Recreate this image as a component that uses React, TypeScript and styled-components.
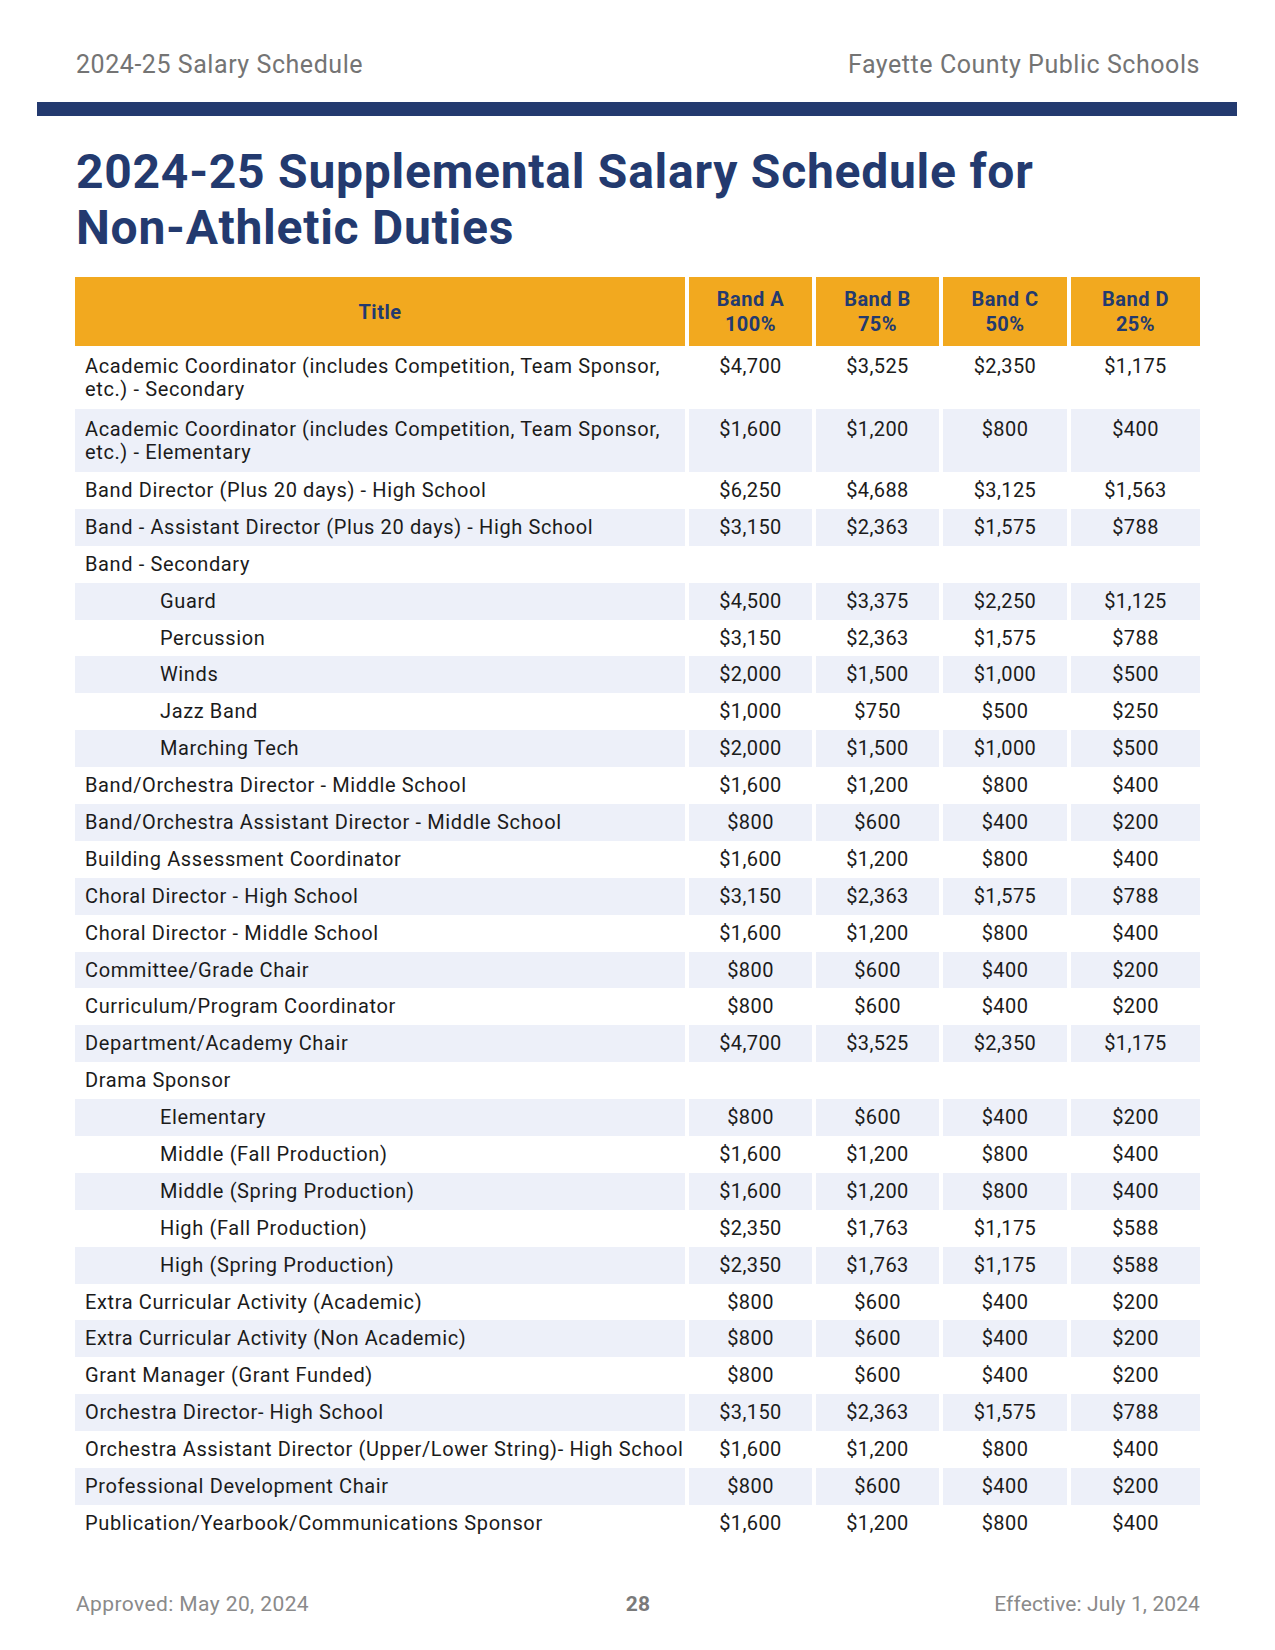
import React from "react";
import styled, { createGlobalStyle } from "styled-components";

const GlobalStyle = createGlobalStyle`
  html, body {
    margin: 0;
    padding: 0;
    background: #ffffff;
  }
  body {
    font-family: Roboto, "Liberation Sans", Arial, sans-serif;
    color: #1b1b1b;
  }
`;

const Page = styled.div`
  width: 1275px;
  min-height: 1650px;
  box-sizing: border-box;
  padding-top: 50px;
`;

const RunningHead = styled.header`
  display: flex;
  justify-content: space-between;
  padding: 0 75px 0 76px;
  font-size: 25px;
  line-height: 30px;
  letter-spacing: 0.55px;
  color: #747474;
`;

const NavyBar = styled.div`
  height: 14px;
  margin: 22px 38px 0 37px;
  background: #233a6f;
`;

const Heading = styled.h1`
  margin: 28px 75px 0 76px;
  font-size: 48px;
  line-height: 56px;
  font-weight: 700;
  letter-spacing: 0.75px;
  color: #233a6f;
`;

const Table = styled.table`
  margin: 21px 0 0 71px;
  width: 1133px;
  table-layout: fixed;
  border-collapse: separate;
  border-spacing: 4px 0;
`;

const HeadCell = styled.th`
  background: #f2a91f;
  color: #233a6f;
  font-size: 20px;
  line-height: 25px;
  font-weight: 700;
  letter-spacing: 0.5px;
  padding: 10px 4px 9px;
  text-align: center;
  vertical-align: middle;
`;

const Row = styled.tr`
  &:nth-child(even) > td {
    background: #edf0f9;
  }
`;

const TitleCell = styled.td<{ $indent?: boolean; $multi?: boolean }>`
  padding: ${(p) => (p.$multi ? "8.5px 2px 8.5px 10px" : "7px 0 6.9px 10px")};
  padding-left: ${(p) => (p.$indent ? "85px" : "10px")};
  font-size: 20px;
  line-height: 23px;
  letter-spacing: 0.62px;
  white-space: ${(p) => (p.$multi ? "normal" : "nowrap")};
  vertical-align: top;
  text-align: left;
`;

const AmountCell = styled.td<{ $multi?: boolean }>`
  padding: ${(p) => (p.$multi ? "8.5px 0" : "7px 0 6.9px")};
  font-size: 20px;
  line-height: 23px;
  letter-spacing: 0.4px;
  vertical-align: top;
  text-align: center;
`;

const Footer = styled.footer`
  display: grid;
  grid-template-columns: 1fr auto 1fr;
  margin: 50px 75px 0 76px;
  font-size: 21px;
  line-height: 25px;
  letter-spacing: 0.3px;
  color: #8a8a8a;
`;

const FooterLeft = styled.span`
  justify-self: start;
  letter-spacing: 0.4px;
`;

const PageNumber = styled.span`
  justify-self: center;
  font-weight: 700;
  color: #7a7a7a;
`;

const FooterRight = styled.span`
  justify-self: end;
  letter-spacing: 0.1px;
`;

type Entry = {
  title: string;
  values?: [string, string, string, string];
  indent?: boolean;
  multi?: boolean;
};

const rows: Entry[] = [
  {
    title: "Academic Coordinator (includes Competition, Team Sponsor, etc.) - Secondary",
    values: ["$4,700", "$3,525", "$2,350", "$1,175"],
    multi: true,
  },
  {
    title: "Academic Coordinator (includes Competition, Team Sponsor, etc.) - Elementary",
    values: ["$1,600", "$1,200", "$800", "$400"],
    multi: true,
  },
  { title: "Band Director (Plus 20 days) - High School", values: ["$6,250", "$4,688", "$3,125", "$1,563"] },
  { title: "Band - Assistant Director (Plus 20 days) - High School", values: ["$3,150", "$2,363", "$1,575", "$788"] },
  { title: "Band - Secondary" },
  { title: "Guard", values: ["$4,500", "$3,375", "$2,250", "$1,125"], indent: true },
  { title: "Percussion", values: ["$3,150", "$2,363", "$1,575", "$788"], indent: true },
  { title: "Winds", values: ["$2,000", "$1,500", "$1,000", "$500"], indent: true },
  { title: "Jazz Band", values: ["$1,000", "$750", "$500", "$250"], indent: true },
  { title: "Marching Tech", values: ["$2,000", "$1,500", "$1,000", "$500"], indent: true },
  { title: "Band/Orchestra Director - Middle School", values: ["$1,600", "$1,200", "$800", "$400"] },
  { title: "Band/Orchestra Assistant Director - Middle School", values: ["$800", "$600", "$400", "$200"] },
  { title: "Building Assessment Coordinator", values: ["$1,600", "$1,200", "$800", "$400"] },
  { title: "Choral Director - High School", values: ["$3,150", "$2,363", "$1,575", "$788"] },
  { title: "Choral Director - Middle School", values: ["$1,600", "$1,200", "$800", "$400"] },
  { title: "Committee/Grade Chair", values: ["$800", "$600", "$400", "$200"] },
  { title: "Curriculum/Program Coordinator", values: ["$800", "$600", "$400", "$200"] },
  { title: "Department/Academy Chair", values: ["$4,700", "$3,525", "$2,350", "$1,175"] },
  { title: "Drama Sponsor" },
  { title: "Elementary", values: ["$800", "$600", "$400", "$200"], indent: true },
  { title: "Middle (Fall Production)", values: ["$1,600", "$1,200", "$800", "$400"], indent: true },
  { title: "Middle (Spring Production)", values: ["$1,600", "$1,200", "$800", "$400"], indent: true },
  { title: "High (Fall Production)", values: ["$2,350", "$1,763", "$1,175", "$588"], indent: true },
  { title: "High (Spring Production)", values: ["$2,350", "$1,763", "$1,175", "$588"], indent: true },
  { title: "Extra Curricular Activity (Academic)", values: ["$800", "$600", "$400", "$200"] },
  { title: "Extra Curricular Activity (Non Academic)", values: ["$800", "$600", "$400", "$200"] },
  { title: "Grant Manager (Grant Funded)", values: ["$800", "$600", "$400", "$200"] },
  { title: "Orchestra Director- High School", values: ["$3,150", "$2,363", "$1,575", "$788"] },
  {
    title: "Orchestra Assistant Director (Upper/Lower String)- High School",
    values: ["$1,600", "$1,200", "$800", "$400"],
  },
  { title: "Professional Development Chair", values: ["$800", "$600", "$400", "$200"] },
  { title: "Publication/Yearbook/Communications Sponsor", values: ["$1,600", "$1,200", "$800", "$400"] },
];

const bands = [
  ["Band A", "100%"],
  ["Band B", "75%"],
  ["Band C", "50%"],
  ["Band D", "25%"],
];

export default function App() {
  return (
    <Page>
      <GlobalStyle />
      <RunningHead>
        <span>2024-25 Salary Schedule</span>
        <span>Fayette County Public Schools</span>
      </RunningHead>
      <NavyBar />
      <Heading>
        2024-25 Supplemental Salary Schedule for
        <br />
        Non-Athletic Duties
      </Heading>
      <Table>
        <colgroup>
          <col style={{ width: 610 }} />
          <col style={{ width: 123 }} />
          <col style={{ width: 123 }} />
          <col style={{ width: 124 }} />
          <col />
        </colgroup>
        <thead>
          <tr>
            <HeadCell>Title</HeadCell>
            {bands.map(([name, pct]) => (
              <HeadCell key={name}>
                {name}
                <br />
                {pct}
              </HeadCell>
            ))}
          </tr>
        </thead>
        <tbody>
          {rows.map((r, i) => (
            <Row key={i}>
              <TitleCell $indent={r.indent} $multi={r.multi}>
                {r.title}
              </TitleCell>
              {(r.values ?? ["", "", "", ""]).map((v, j) => (
                <AmountCell key={j} $multi={r.multi}>
                  {v}
                </AmountCell>
              ))}
            </Row>
          ))}
        </tbody>
      </Table>
      <Footer>
        <FooterLeft>Approved: May 20, 2024</FooterLeft>
        <PageNumber>28</PageNumber>
        <FooterRight>Effective: July 1, 2024</FooterRight>
      </Footer>
    </Page>
  );
}
